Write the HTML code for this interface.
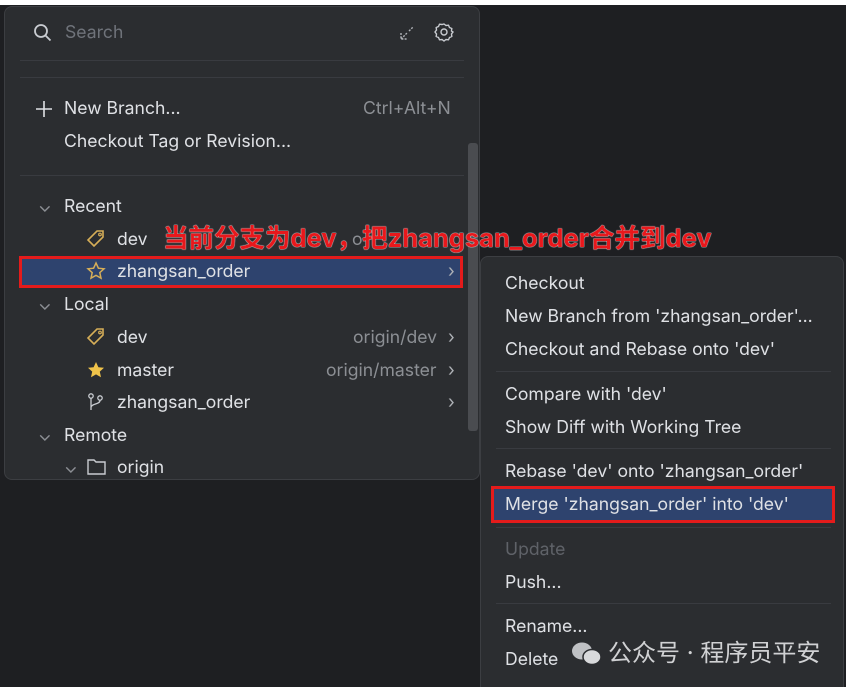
<!DOCTYPE html>
<html><head><meta charset="utf-8"><style>
*{margin:0;padding:0;box-sizing:border-box}
html,body{width:846px;height:687px;overflow:hidden}
body{background:#fff;position:relative;font-family:"Inter","Liberation Sans","Noto Sans CJK SC",sans-serif;color:#dfe1e5;font-size:17.6px}
.bg{position:absolute;left:0;top:5px;width:846px;height:682px;background:#1e1f22}
.pop{position:absolute;left:4px;top:6px;width:476px;height:474px;background:#2b2d30;border:1px solid #3c3e42;border-radius:8px}
.sub{position:absolute;left:480px;top:256px;width:364px;height:460px;background:#2b2d30;border:1px solid #3c3e42;border-radius:8px}
.t{position:absolute;white-space:nowrap;line-height:22px}
.g{color:#8c8f94}
.sep{position:absolute;height:1px;background:#393b40}
svg{position:absolute}
</style></head><body>
<div class="bg"></div>
<div class="pop"></div>
<svg style="left:33px;top:23px" width="20" height="20" viewBox="0 0 20 20"><circle cx="8" cy="8" r="6" fill="none" stroke="#c9ccd1" stroke-width="1.8"/><path d="M12.5 12.5L17.5 17.5" stroke="#c9ccd1" stroke-width="1.8"/></svg>
<div class="t g" style="left:65px;top:22px;color:#6f737a">Search</div>
<svg style="left:398px;top:24px" width="18" height="18" viewBox="0 0 18 18"><path d="M3 15L9 9M3 9v6h6M11 7l4-4" stroke="#aeb1b6" stroke-width="1.4" fill="none" stroke-dasharray="2 1.2"/></svg>
<svg style="left:434px;top:22px" width="20" height="20" viewBox="0 0 20 20"><path d="M10 2l2 1.5 2.5-.3 1 2.3 2.3 1-.3 2.5L19 10l-1.5 2 .3 2.5-2.3 1-1 2.3-2.5-.3L10 19l-2-1.5-2.5.3-1-2.3-2.3-1 .3-2.5L1 10l1.5-2-.3-2.5 2.3-1 1-2.3 2.5.3z" fill="none" stroke="#c9ccd1" stroke-width="1.4"/><circle cx="10" cy="10" r="3" fill="none" stroke="#c9ccd1" stroke-width="1.4"/></svg>
<div class="sep" style="left:20px;top:60px;width:444px"></div>
<div class="sep" style="left:20px;top:77px;width:444px"></div>
<svg style="left:35px;top:100px" width="18" height="18" viewBox="0 0 18 18"><path d="M9 1v16M1 9h16" stroke="#dfe1e5" stroke-width="1.6"/></svg>
<div class="t" style="left:64px;top:98px">New Branch...</div>
<div class="t g" style="left:363px;top:98px">Ctrl+Alt+N</div>
<div class="t" style="left:64px;top:131px">Checkout Tag or Revision...</div>
<div class="sep" style="left:20px;top:175px;width:444px"></div>
<div style="position:absolute;left:468px;top:143px;width:10px;height:288px;background:#4a4c50;border-radius:3px"></div>
<div class="t g" style="left:38px;top:196px">⌄</div>
<div class="t" style="left:64px;top:196px">Recent</div>
<svg style="left:86px;top:229px" width="20" height="20" viewBox="0 0 20 20"><path d="M11 2h6v6l-9 9-6-6z" fill="none" stroke="#d6ae58" stroke-width="1.6"/><circle cx="14" cy="5.5" r="1.3" fill="none" stroke="#d6ae58" stroke-width="1.2"/></svg>
<div class="t" style="left:117px;top:229px">dev</div>
<div class="t g" style="left:352px;top:229px">o</div>
<div style="position:absolute;left:19px;top:256px;width:444px;height:32px;background:#2e436e;border:3px solid #e41b1b"></div>
<svg style="left:86px;top:261px" width="20" height="20" viewBox="0 0 20 20"><path d="M10 2l2.4 5.2 5.6.6-4.2 3.8 1.2 5.6L10 14.4 5 17.2l1.2-5.6L2 7.8l5.6-.6z" fill="none" stroke="#d6ae58" stroke-width="1.5"/></svg>
<div class="t" style="left:117px;top:261px">zhangsan_order</div>
<div class="t" style="left:448px;top:261px;color:#aeb1b6">›</div>
<div class="t" style="left:163px;top:226px;font-weight:bold;font-size:25.5px;line-height:26px;color:#e8181c;text-shadow:0 0 1px #fff,0 0 1px #fff">当前分支为dev，把zhangsan_order合并到dev</div>
<div class="t g" style="left:38px;top:294px">⌄</div>
<div class="t" style="left:64px;top:294px">Local</div>
<svg style="left:86px;top:327px" width="20" height="20" viewBox="0 0 20 20"><path d="M11 2h6v6l-9 9-6-6z" fill="none" stroke="#d6ae58" stroke-width="1.6"/><circle cx="14" cy="5.5" r="1.3" fill="none" stroke="#d6ae58" stroke-width="1.2"/></svg>
<div class="t" style="left:117px;top:327px">dev</div>
<div class="t g" style="left:353px;top:327px">origin/dev</div>
<div class="t" style="left:448px;top:327px;color:#aeb1b6">›</div>
<svg style="left:86px;top:360px" width="20" height="20" viewBox="0 0 20 20"><path d="M10 2l2.4 5.2 5.6.6-4.2 3.8 1.2 5.6L10 14.4 5 17.2l1.2-5.6L2 7.8l5.6-.6z" fill="#f0c34a"/></svg>
<div class="t" style="left:117px;top:360px">master</div>
<div class="t g" style="left:326px;top:360px">origin/master</div>
<div class="t" style="left:448px;top:360px;color:#aeb1b6">›</div>
<svg style="left:86px;top:392px" width="20" height="20" viewBox="0 0 20 20"><circle cx="5" cy="4" r="2.2" fill="none" stroke="#c9ccd1" stroke-width="1.3"/><circle cx="14" cy="6" r="2.2" fill="none" stroke="#c9ccd1" stroke-width="1.3"/><path d="M5 6.5V18M14 8.5c0 4-9 3-9 7" fill="none" stroke="#c9ccd1" stroke-width="1.3"/></svg>
<div class="t" style="left:117px;top:392px">zhangsan_order</div>
<div class="t" style="left:448px;top:392px;color:#aeb1b6">›</div>
<div class="t g" style="left:38px;top:425px">⌄</div>
<div class="t" style="left:64px;top:425px">Remote</div>
<div class="t g" style="left:64px;top:457px">⌄</div>
<svg style="left:86px;top:457px" width="22" height="20" viewBox="0 0 22 20"><path d="M2 3h6l2 2h9v12H2z" fill="none" stroke="#c9ccd1" stroke-width="1.4"/></svg>
<div class="t" style="left:117px;top:457px">origin</div>
<div class="sub"></div>
<div class="t" style="left:505px;top:273px">Checkout</div>
<div class="t" style="left:505px;top:306px">New Branch from 'zhangsan_order'...</div>
<div class="t" style="left:505px;top:339px">Checkout and Rebase onto 'dev'</div>
<div class="sep" style="left:496px;top:371px;width:335px"></div>
<div class="t" style="left:505px;top:384px">Compare with 'dev'</div>
<div class="t" style="left:505px;top:417px">Show Diff with Working Tree</div>
<div class="sep" style="left:496px;top:448px;width:335px"></div>
<div class="t" style="left:505px;top:461px">Rebase 'dev' onto 'zhangsan_order'</div>
<div style="position:absolute;left:491px;top:486px;width:344px;height:37px;background:#2e436e;border:3px solid #e41b1b"></div>
<div class="t" style="left:505px;top:494px">Merge 'zhangsan_order' into 'dev'</div>
<div class="sep" style="left:496px;top:527px;width:335px"></div>
<div class="t" style="left:505px;top:539px;color:#5f6268">Update</div>
<div class="t" style="left:505px;top:572px">Push...</div>
<div class="sep" style="left:496px;top:603px;width:335px"></div>
<div class="t" style="left:505px;top:616px">Rename...</div>
<div class="t" style="left:505px;top:649px">Delete</div>
<svg style="left:570px;top:640px" width="34" height="28" viewBox="0 0 34 28"><ellipse cx="12" cy="11" rx="10" ry="8.5" fill="#bfc1c4"/><ellipse cx="22" cy="17" rx="9" ry="7.5" fill="#d8d9db" stroke="#2b2d30" stroke-width="1.5"/></svg>
<div class="t" style="left:608px;top:640px;font-size:24px;line-height:26px;color:#d0d1d3">公众号 · 程序员平安</div>
</body></html>
